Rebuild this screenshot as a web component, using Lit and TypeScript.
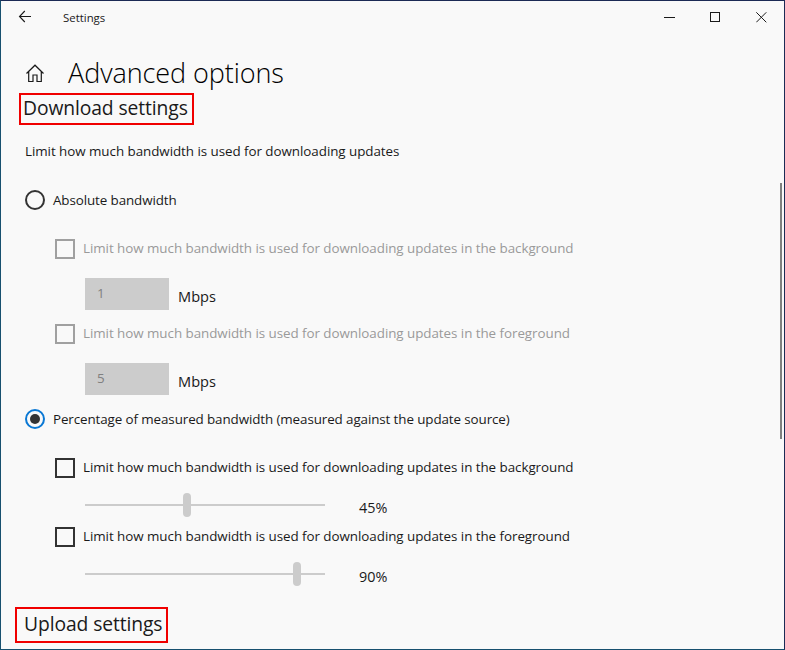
import { LitElement, html, css } from "lit";
import { customElement } from "lit/decorators.js";

const LABEL_BG = "Limit how much bandwidth is used for downloading updates in the background";
const LABEL_FG = "Limit how much bandwidth is used for downloading updates in the foreground";

@customElement("app-root")
export class AppRoot extends LitElement {
  static styles = css`
    :host {
      display: block;
      position: relative;
      width: 785px;
      height: 650px;
      box-sizing: border-box;
      overflow: hidden;
      background: #f9f9f9;
      border: 1px solid #1b2a55;
      border-left-color: #17506f;
      border-bottom-color: #17506f;
      color: #1a1a1a;
      font-family: "Open Sans", "Noto Sans", sans-serif;
      font-size: 13.4px;
      letter-spacing: -0.05px;
    }
    .titlebar {
      display: flex;
      align-items: center;
      height: 33px;
    }
    .back {
      display: flex;
      margin-left: 17px;
      width: 16px;
    }
    .apptitle {
      margin-left: 29px;
      font-size: 11.4px;
      letter-spacing: 0;
    }
    .winctl {
      margin-left: auto;
      display: flex;
      align-items: center;
      gap: 35px;
      margin-right: 17px;
    }
    .winctl svg { display: block; }
    .content {
      display: flex;
      flex-direction: column;
      align-items: flex-start;
    }
    .pagehead {
      display: flex;
      align-items: center;
      height: 38px;
      margin-top: 20px;
    }
    .home { display: flex; margin-left: 24px; }
    h1 {
      margin: 0 0 0 23px;
      font-size: 27px;
      font-weight: 300;
      letter-spacing: -0.08px;
      line-height: 38px;
      white-space: nowrap;
      color: #000;
    }
    .sect {
      box-sizing: border-box;
      border: 2px solid #f00000;
      font-size: 19.3px;
      letter-spacing: -0.1px;
      font-weight: 400;
      margin: 0;
      white-space: nowrap;
      display: flex;
      align-items: center;
      padding-bottom: 4px;
    }
    .dl { margin: 1px 0 0 18px; height: 32px; width: 175px; padding-left: 2px; }
    .ul { margin: 21px 0 0 14px; height: 36px; width: 153px; padding-left: 7px; }
    .desc { margin: 16px 0 0 24px; line-height: 20px; }
    .radio {
      display: flex;
      align-items: center;
      gap: 8px;
      margin-left: 24px;
      height: 20px;
      white-space: nowrap;
      letter-spacing: -0.1px;
    }
    .radio i {
      box-sizing: border-box;
      width: 20px;
      height: 20px;
      border-radius: 50%;
      border: 2px solid #333;
      display: flex;
      align-items: center;
      justify-content: center;
    }
    .radio.on i { border-color: #0a78d4; }
    .radio.on i::after {
      content: "";
      width: 10px;
      height: 10px;
      border-radius: 50%;
      background: #333;
    }
    .r1 { margin-top: 29px; }
    .r2 { margin-top: 14px; }
    .check {
      display: flex;
      align-items: center;
      gap: 8px;
      margin-left: 54px;
      height: 20px;
      white-space: nowrap;
      letter-spacing: -0.05px;
    }
    .check span { margin-top: -2px; }
    .check i {
      box-sizing: border-box;
      width: 20px;
      height: 20px;
      border: 2px solid #333;
    }
    .check.off { color: #9a9a9a; }
    .check.off i { border-color: #a0a0a0; }
    .c1 { margin-top: 29px; }
    .c2 { margin-top: 14px; }
    .c3 { margin-top: 29px; }
    .c4 { margin-top: 10px; }
    .numrow {
      display: flex;
      margin: 19px 0 0 84px;
      height: 32px;
    }
    .num {
      box-sizing: border-box;
      width: 84px;
      height: 32px;
      background: #cccccc;
      color: #808080;
      padding: 5px 0 0 12px;
      line-height: 20px;
    }
    .unit { margin: 8px 0 0 9px; line-height: 20px; font-size: 14.6px; letter-spacing: 0; }
    .sliderrow {
      display: flex;
      align-items: center;
      margin: 15px 0 0 84px;
      height: 24px;
    }
    .slider {
      position: relative;
      width: 240px;
      height: 24px;
    }
    .slider::before {
      content: "";
      position: absolute;
      left: 0;
      right: 0;
      top: 11px;
      height: 2px;
      background: #cccccc;
    }
    .thumb {
      position: absolute;
      top: 0;
      width: 8px;
      height: 24px;
      margin-left: -4px;
      border-radius: 4px;
      background: #cccccc;
    }
    .val { margin: 5px 0 0 34px; font-size: 14.4px; letter-spacing: 0; }
    .scroll {
      position: absolute;
      right: 2px;
      top: 182px;
      width: 2px;
      height: 256px;
      background: #7f7f7f;
    }
  `;

  private check(label: string, cls: string) {
    return html`<div class="check ${cls}"><i></i><span>${label}</span></div>`;
  }
  private num(v: string) {
    return html`<div class="numrow"><div class="num">${v}</div><div class="unit">Mbps</div></div>`;
  }
  private slider(v: number) {
    const left = 4 + ((v - 5) / 95) * 232;
    return html`<div class="sliderrow">
      <div class="slider"><div class="thumb" style="left:${left}px"></div></div>
      <div class="val">${v}%</div>
    </div>`;
  }

  render() {
    return html`
      <div class="titlebar">
        <span class="back">
          <svg width="16" height="15" viewBox="0 0 16 15" fill="none" stroke="#1a1a1a" stroke-width="1.1">
            <path d="M1.5 6.5H13M6.8 1 1.5 6.5 6.8 12" />
          </svg>
        </span>
        <span class="apptitle">Settings</span>
        <div class="winctl">
          <svg width="11" height="11" viewBox="0 0 11 11" fill="none" stroke="#1a1a1a" stroke-width="1">
            <path d="M0 5.5h11" />
          </svg>
          <svg width="11" height="11" viewBox="0 0 11 11" fill="none" stroke="#1a1a1a" stroke-width="1">
            <rect x=".5" y=".5" width="9" height="9" />
          </svg>
          <svg width="11" height="11" viewBox="0 0 11 11" fill="none" stroke="#1a1a1a" stroke-width="1">
            <path d="M.3.3l10 10M10.3.3l-10 10" />
          </svg>
        </div>
      </div>
      <div class="content">
        <div class="pagehead">
          <span class="home">
            <svg width="20" height="20" viewBox="0 0 20 20" fill="none" stroke="#1a1a1a" stroke-width="1.2">
              <path d="M1.5 10.5 10 2.2l8.5 8.3M3.7 8.7v9.8H8V12h4v6.5h4.3V8.7" />
            </svg>
          </span>
          <h1>Advanced options</h1>
        </div>
        <h2 class="sect dl">Download settings</h2>
        <div class="desc">Limit how much bandwidth is used for downloading updates</div>
        <div class="radio r1"><i></i><span>Absolute bandwidth</span></div>
        ${this.check(LABEL_BG, "off c1")}
        ${this.num("1")}
        ${this.check(LABEL_FG, "off c2")}
        ${this.num("5")}
        <div class="radio on r2"><i></i><span>Percentage of measured bandwidth (measured against the update source)</span></div>
        ${this.check(LABEL_BG, "c3")}
        ${this.slider(45)}
        ${this.check(LABEL_FG, "c4")}
        ${this.slider(90)}
        <h2 class="sect ul">Upload settings</h2>
      </div>
      <div class="scroll"></div>
    `;
  }
}
